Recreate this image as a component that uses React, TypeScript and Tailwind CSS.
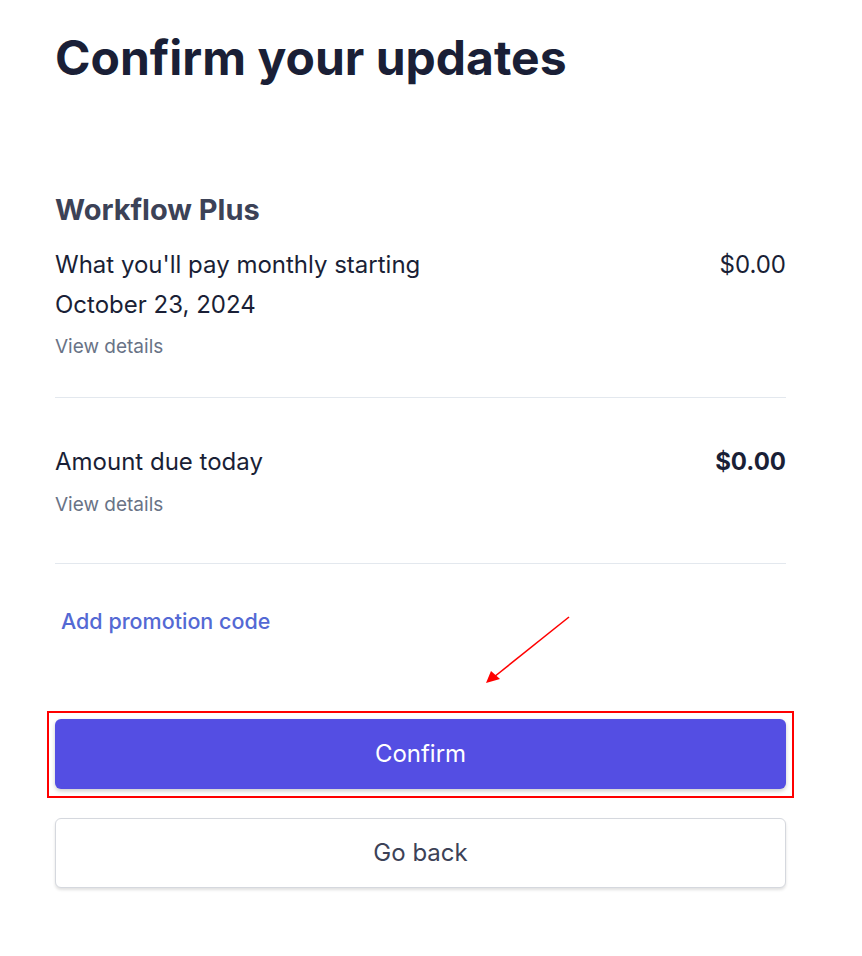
import React from "react";

export default function App() {
  return (
    <div className="min-h-[956px] w-[862px] bg-white font-['Inter',sans-serif] relative">
      <div className="ml-[55px] w-[731px] pt-[26px]">
        <h1 className="text-[48px] leading-[64px] font-bold text-[#1a1f36]">
          Confirm your updates
        </h1>

        <div className="mt-[102px]">
          <h2 className="text-[29px] leading-[36px] font-bold text-[#3c4257]">Workflow Plus</h2>
          <div className="mt-[17px] flex justify-between text-[24px] leading-[40px] text-[#1a1f36]">
            <div>
              What you'll pay monthly starting
              <br />
              October 23, 2024
            </div>
            <div>$0.00</div>
          </div>
          <div className="mt-[10px] text-[19px] leading-[24px] text-[#697386]">View details</div>
        </div>

        <div className="mt-[38px] h-px bg-[#e3e8ee]" />

        <div className="mt-[44px]">
          <div className="flex justify-between text-[24px] leading-[40px] text-[#1a1f36]">
            <div>Amount due today</div>
            <div className="font-bold">$0.00</div>
          </div>
          <div className="mt-[11px] text-[19px] leading-[24px] text-[#697386]">View details</div>
        </div>

        <div className="mt-[46px] h-px bg-[#e3e8ee]" />

        <div className="mt-[42px] pl-[6px] text-[21.5px] leading-[30px] font-medium text-[#5469d4]">
          Add promotion code
        </div>

        <div className="mt-[83px] relative">
          <div className="absolute -left-[8px] -right-[8px] -top-[8px] -bottom-[9px] border-2 border-[#ff0000] pointer-events-none" />
          <button className="w-full h-[70px] rounded-[6px] bg-[#544ee3] text-white text-[24px] shadow-[0_2px_4px_rgba(0,0,0,0.2)]">
            Confirm
          </button>
        </div>

        <button className="mt-[29px] w-full h-[70px] rounded-[6px] bg-white text-[#3c4257] text-[24px] border border-[#d5d8de] shadow-[0_2px_3px_rgba(0,0,0,0.12)]">
          Go back
        </button>
      </div>

      <svg className="absolute left-0 top-0 pointer-events-none" width="862" height="956">
        <line x1="569" y1="617" x2="494" y2="677" stroke="#ff0000" strokeWidth="1.6" />
        <polygon points="486,683 491,671 500,679" fill="#ff0000" />
      </svg>
    </div>
  );
}
